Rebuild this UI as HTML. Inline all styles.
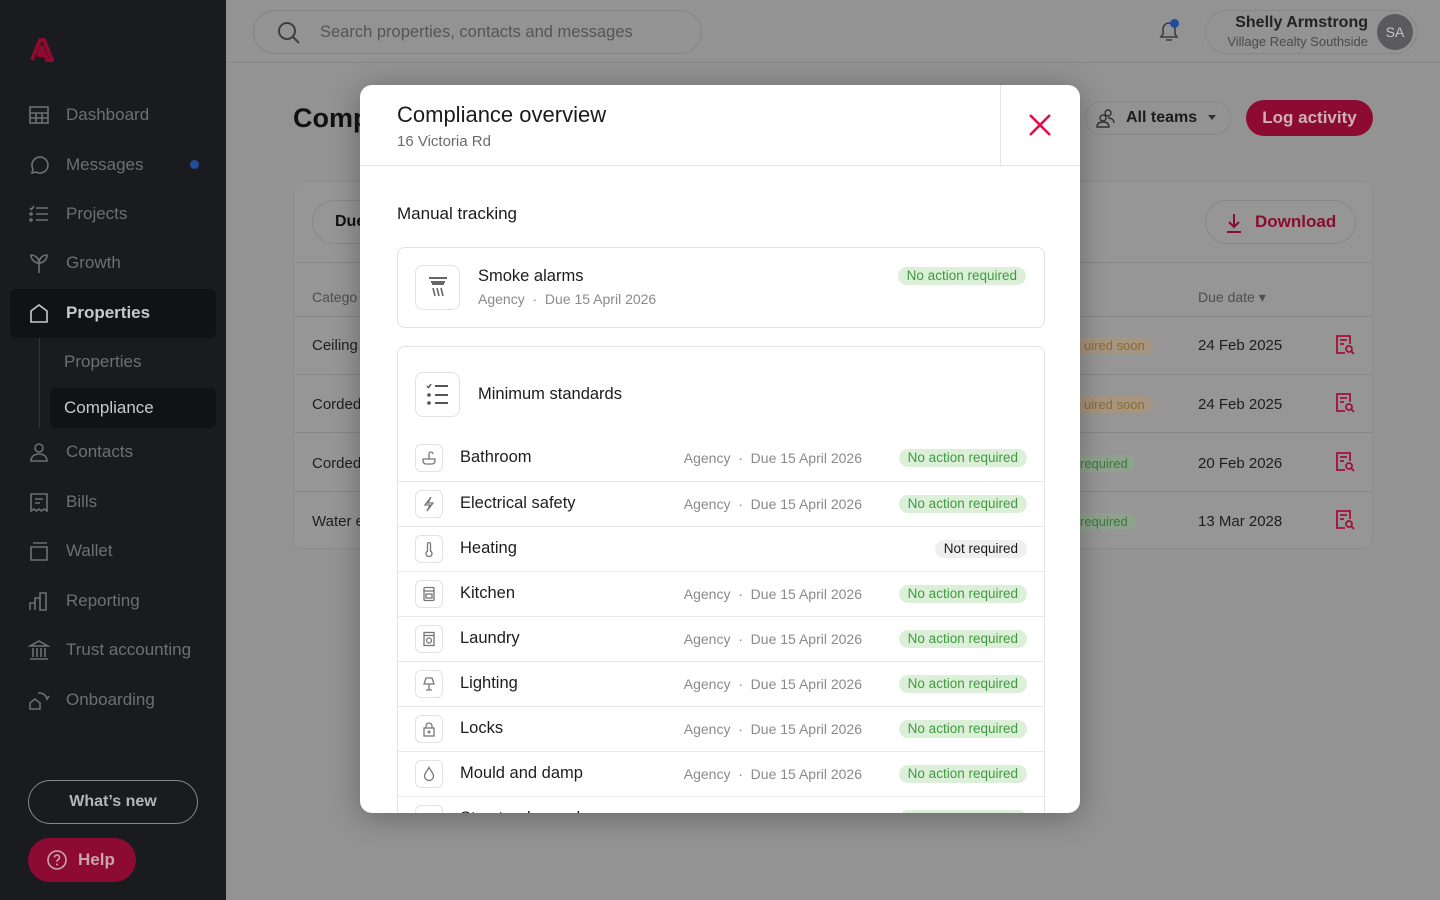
<!DOCTYPE html>
<html><head><meta charset="utf-8"><style>
*{box-sizing:border-box;margin:0;padding:0}
body{width:1440px;height:900px;overflow:hidden;font-family:"Liberation Sans",sans-serif;background:#939393;position:relative}
.abs{position:absolute}
.sb{left:0;top:0;width:226px;height:900px;background:#1a1b1f}
.nav{position:absolute;left:28px;font-size:17px;color:#6e6f73;display:flex;align-items:center;gap:16px;height:24px}
.nav svg{width:22px;height:22px;stroke:#6e6f73;fill:none;stroke-width:1.6}
.modal{left:360px;top:85px;width:720px;height:728px;background:#fff;border-radius:12px;overflow:hidden;box-shadow:0 4px 30px rgba(0,0,0,.3)}
.pill{position:absolute;right:18px;height:18px;line-height:18px;padding:0 9px;border-radius:9px;background:#dcefd8;color:#3f9a3f;font-size:13.5px}
.row{position:absolute;left:0;width:647px;height:45px;border-top:1px solid #e8e8e8}
.row .ic{position:absolute;left:17px;top:8px;width:28px;height:28px;border:1px solid #e2e2e2;border-radius:6px;display:flex;align-items:center;justify-content:center}
.row .ic svg{width:16px;height:16px;stroke:#777;fill:none;stroke-width:1.3}
.row .nm{position:absolute;left:62px;top:12px;font-size:16.5px;color:#1d1d1f}
.row .mt{position:absolute;right:183px;top:14px;font-size:14px;color:#8a8a8a}
.row .pill{top:13px}
.tr{position:absolute;left:0;width:1080px;height:58px;border-top:1px solid #878787}
</style></head><body>
<div class="abs sb"></div>
<svg class="abs" style="left:30px;top:38px" width="24" height="24" viewBox="0 0 24 24"><path d="M2 22 L10 2 L14 2 L22 22 L17 22 L12 9 L9 17 L15 17 L13 13" fill="none" stroke="#8f0a30" stroke-width="4" stroke-linejoin="round"/></svg>
<div class="nav" style="top:103px"><svg viewBox="0 0 22 22"><rect x="2" y="3" width="18" height="16"/><path d="M2 9h18M8 9v10M14 9v10M2 14h18"/></svg>Dashboard</div>
<div class="nav" style="top:153px"><svg viewBox="0 0 22 22"><path d="M4 19l1-4A8 8 0 1 1 8 18z"/></svg>Messages</div>
<div class="abs" style="left:190px;top:160px;width:9px;height:9px;border-radius:50%;background:#234c9a"></div>
<div class="nav" style="top:202px"><svg viewBox="0 0 22 22"><path d="M8 5h12M8 11h12M8 17h12M2 5l1.5 1.5L6 3"/><circle cx="3" cy="11" r="1"/><circle cx="3" cy="17" r="1"/></svg>Projects</div>
<div class="nav" style="top:251px"><svg viewBox="0 0 22 22"><path d="M11 21V11M11 11C11 6 7 3 3 3c0 5 4 8 8 8zM11 11c0-5 4-8 8-8 0 5-4 8-8 8z"/></svg>Growth</div>
<div class="abs" style="left:10px;top:289px;width:206px;height:49px;background:#111216;border-radius:6px"></div>
<div class="nav" style="top:301px;color:#c9c9cb;font-weight:bold"><svg viewBox="0 0 22 22" style="stroke:#c9c9cb"><path d="M3 20V9l8-6 8 6v11z"/></svg>Properties</div>
<div class="abs" style="left:39px;top:338px;width:1px;height:90px;background:#333"></div>
<div class="nav" style="top:350px;left:64px">Properties</div>
<div class="abs" style="left:50px;top:388px;width:166px;height:40px;background:#111216;border-radius:6px"></div>
<div class="nav" style="top:396px;left:64px;color:#c9c9cb">Compliance</div>
<div class="nav" style="top:440px"><svg viewBox="0 0 22 22"><circle cx="11" cy="7" r="4"/><path d="M3 20c0-5 4-7 8-7s8 2 8 7z"/></svg>Contacts</div>
<div class="nav" style="top:490px"><svg viewBox="0 0 22 22"><path d="M3 3h16v17l-3-2-2.5 2-2.5-2-2.5 2L6 18l-3 2zM7 8h8M7 12h5"/></svg>Bills</div>
<div class="nav" style="top:539px"><svg viewBox="0 0 22 22"><path d="M3 7h16v13H3zM5 3h14"/></svg>Wallet</div>
<div class="nav" style="top:589px"><svg viewBox="0 0 22 22"><path d="M2 20V13h5v7M7 20V8h5v12M12 20V3h6v17z"/></svg>Reporting</div>
<div class="nav" style="top:638px"><svg viewBox="0 0 22 22"><path d="M2 7l9-5 9 5zM5 9v9M9 9v9M13 9v9M17 9v9M2 20h18"/></svg>Trust accounting</div>
<div class="nav" style="top:688px"><svg viewBox="0 0 22 22"><path d="M2 20v-6l5-4 5 4v6zM10 4a8 8 0 0 1 9 6l2-3"/></svg>Onboarding</div>
<div class="abs" style="left:28px;top:780px;width:170px;height:44px;border:1.5px solid #88898c;border-radius:22px;color:#b4b5b8;font-size:16px;font-weight:bold;text-align:center;line-height:41px">What’s new</div>
<div class="abs" style="left:28px;top:838px;width:108px;height:44px;background:#8d0b33;border-radius:22px;color:#c9a5b0;font-size:17px;font-weight:bold;line-height:44px;padding-left:50px">Help</div>
<svg class="abs" style="left:46px;top:849px" width="22" height="22" viewBox="0 0 22 22"><circle cx="11" cy="11" r="9" fill="none" stroke="#c9a5b0" stroke-width="1.6"/><path d="M8.5 8.5a2.5 2.5 0 1 1 3.5 2.3c-.8.4-1 1-1 2" fill="none" stroke="#c9a5b0" stroke-width="1.6"/><circle cx="11" cy="15.5" r="1" fill="#c9a5b0"/></svg>

<div class="abs" style="left:226px;top:62px;width:1214px;height:1px;background:#878787"></div>
<div class="abs" style="left:253px;top:10px;width:449px;height:44px;border:1px solid #838383;border-radius:22px"></div>
<svg class="abs" style="left:276px;top:20px" width="26" height="26" viewBox="0 0 26 26"><circle cx="11" cy="11" r="8" fill="none" stroke="#3e3e3e" stroke-width="2"/><path d="M17 17l6 6" stroke="#3e3e3e" stroke-width="2"/></svg>
<div class="abs" style="left:320px;top:23px;font-size:16.5px;color:#555">Search properties, contacts and messages</div>
<svg class="abs" style="left:1156px;top:18px" width="26" height="26" viewBox="0 0 26 26"><path d="M5 19h16l-2-3v-5a6 6 0 0 0-12 0v5zM10 22h6" fill="none" stroke="#3e3e3e" stroke-width="1.6"/></svg>
<div class="abs" style="left:1170px;top:19px;width:9px;height:9px;border-radius:50%;background:#234c9a"></div>
<div class="abs" style="left:1205px;top:10px;width:212px;height:44px;border:1px solid #878787;border-radius:22px"></div>
<div class="abs" style="left:1190px;top:14px;width:178px;text-align:right;font-size:16px;font-weight:bold;color:#222">Shelly Armstrong</div>
<div class="abs" style="left:1190px;top:34px;width:178px;text-align:right;font-size:13px;color:#4a4a4a">Village Realty Southside</div>
<div class="abs" style="left:1377px;top:14px;width:36px;height:36px;border-radius:50%;background:#5b5b5d;color:#c6c6c6;font-size:14px;text-align:center;line-height:36px">SA</div>

<div class="abs" style="left:293px;top:103px;font-size:27px;font-weight:bold;color:#111">Comp</div>
<div class="abs" style="left:1085px;top:101px;width:146px;height:34px;border:1px solid #878787;border-radius:17px;font-size:16px;font-weight:bold;color:#1b1b1b;line-height:32px;padding-left:40px">All teams</div>
<svg class="abs" style="left:1096px;top:108px" width="20" height="20" viewBox="0 0 20 20"><circle cx="12" cy="5" r="3" fill="none" stroke="#333" stroke-width="1.4"/><circle cx="7" cy="10" r="3" fill="none" stroke="#333" stroke-width="1.4"/><path d="M1 19c0-4 3-5 6-5s6 1 6 5zM12 10c4 0 6 2 6 5" fill="none" stroke="#333" stroke-width="1.4"/></svg>
<div class="abs" style="left:1208px;top:115px;border:4px solid transparent;border-top:5px solid #333"></div>
<div class="abs" style="left:1246px;top:100px;width:127px;height:36px;background:#8d0b33;border-radius:18px;color:#cfb0ba;font-size:17px;font-weight:bold;text-align:center;line-height:36px">Log activity</div>
<div class="abs" style="left:293px;top:181px;width:1080px;height:368px;background:#969696;border-radius:10px;border:1px solid #8c8c8c;overflow:hidden">
  <div class="abs" style="left:18px;top:18px;width:80px;height:44px;border:1px solid #888;border-radius:22px;font-size:16px;font-weight:bold;color:#111;line-height:42px;padding-left:22px">Due</div>
  <div class="abs" style="left:911px;top:18px;width:151px;height:44px;border:1px solid #888;border-radius:22px;font-size:17px;font-weight:bold;color:#8a0c30;line-height:42px;padding-left:49px">Download</div>
  <svg class="abs" style="left:929px;top:30px" width="22" height="22" viewBox="0 0 22 22"><path d="M11 2v13M6 10l5 5 5-5M4 20h14" fill="none" stroke="#8a0c30" stroke-width="2"/></svg>
  <div class="tr" style="top:80px;border-top:1.5px solid #878787;height:55px"><div class="abs" style="left:18px;top:26px;font-size:14px;color:#4e4e4e">Catego</div><div class="abs" style="left:904px;top:26px;font-size:14px;color:#4e4e4e">Due date ▾</div></div>
  <div class="tr" style="top:134px"><div class="abs" style="left:18px;top:20px;font-size:15px;color:#1e1e1e">Ceiling</div><div class="abs" style="left:770px;top:20px;height:17px;padding:0 8px 0 20px;border-radius:9px;background:#a69580;color:#8c6b32;font-size:13px;line-height:17px">uired soon</div><div class="abs" style="left:904px;top:20px;font-size:15px;color:#1e1e1e">24 Feb 2025</div></div>
  <div class="tr" style="top:192px"><div class="abs" style="left:18px;top:21px;font-size:15px;color:#1e1e1e">Corded</div><div class="abs" style="left:770px;top:21px;height:17px;padding:0 8px 0 20px;border-radius:9px;background:#a69580;color:#8c6b32;font-size:13px;line-height:17px">uired soon</div><div class="abs" style="left:904px;top:21px;font-size:15px;color:#1e1e1e">24 Feb 2025</div></div>
  <div class="tr" style="top:250px"><div class="abs" style="left:18px;top:22px;font-size:15px;color:#1e1e1e">Corded</div><div class="abs" style="left:770px;top:22px;height:17px;padding:0 8px 0 16px;border-radius:9px;background:#8fa28d;color:#3c7a3c;font-size:13px;line-height:17px">required</div><div class="abs" style="left:904px;top:22px;font-size:15px;color:#1e1e1e">20 Feb 2026</div></div>
  <div class="tr" style="top:309px"><div class="abs" style="left:18px;top:21px;font-size:15px;color:#1e1e1e">Water e</div><div class="abs" style="left:770px;top:21px;height:17px;padding:0 8px 0 16px;border-radius:9px;background:#8fa28d;color:#3c7a3c;font-size:13px;line-height:17px">required</div><div class="abs" style="left:904px;top:21px;font-size:15px;color:#1e1e1e">13 Mar 2028</div></div>
</div>
<svg class="abs" style="left:1334px;top:334px" width="22" height="22" viewBox="0 0 22 22"><path d="M11 19H3V2h13v8M6 6h7M6 10h4" fill="none" stroke="#a2103e" stroke-width="1.8"/><circle cx="15" cy="15" r="3" fill="none" stroke="#a2103e" stroke-width="1.8"/><path d="M17 17l3 3" stroke="#a2103e" stroke-width="1.8"/></svg>
<svg class="abs" style="left:1334px;top:392px" width="22" height="22" viewBox="0 0 22 22"><path d="M11 19H3V2h13v8M6 6h7M6 10h4" fill="none" stroke="#a2103e" stroke-width="1.8"/><circle cx="15" cy="15" r="3" fill="none" stroke="#a2103e" stroke-width="1.8"/><path d="M17 17l3 3" stroke="#a2103e" stroke-width="1.8"/></svg>
<svg class="abs" style="left:1334px;top:451px" width="22" height="22" viewBox="0 0 22 22"><path d="M11 19H3V2h13v8M6 6h7M6 10h4" fill="none" stroke="#a2103e" stroke-width="1.8"/><circle cx="15" cy="15" r="3" fill="none" stroke="#a2103e" stroke-width="1.8"/><path d="M17 17l3 3" stroke="#a2103e" stroke-width="1.8"/></svg>
<svg class="abs" style="left:1334px;top:509px" width="22" height="22" viewBox="0 0 22 22"><path d="M11 19H3V2h13v8M6 6h7M6 10h4" fill="none" stroke="#a2103e" stroke-width="1.8"/><circle cx="15" cy="15" r="3" fill="none" stroke="#a2103e" stroke-width="1.8"/><path d="M17 17l3 3" stroke="#a2103e" stroke-width="1.8"/></svg>

<div class="abs modal">
  <div class="abs" style="left:37px;top:17px;font-size:22px;color:#1b1b1d">Compliance overview</div>
  <div class="abs" style="left:37px;top:48px;font-size:15px;color:#6b6b6b">16 Victoria Rd</div>
  <div class="abs" style="left:640px;top:0;width:1px;height:80px;background:#e4e4e4"></div>
  <svg class="abs" style="left:667px;top:27px" width="26" height="26" viewBox="0 0 26 26"><path d="M3 3l20 20M23 3L3 23" stroke="#e0104d" stroke-width="2.6"/></svg>
  <div class="abs" style="left:0;top:80px;width:720px;height:1px;background:#e4e4e4"></div>
  <div class="abs" style="left:37px;top:119px;font-size:17px;color:#1b1b1d">Manual tracking</div>
  <div class="abs" style="left:37px;top:162px;width:648px;height:81px;border:1px solid #e2e2e2;border-radius:8px">
    <div class="abs" style="left:17px;top:17px;width:45px;height:45px;border:1px solid #e2e2e2;border-radius:8px"></div>
    <svg class="abs" style="left:28px;top:27px" width="24" height="26" viewBox="0 0 24 26"><path d="M3 3h18M5 7h14M7 7v2h10V7" fill="none" stroke="#666" stroke-width="2"/><path d="M7 13l2 8M11 13l2 8M15 13l2 8" stroke="#666" stroke-width="1.6"/></svg>
    <div class="abs" style="left:80px;top:19px;font-size:16.5px;color:#1b1b1d">Smoke alarms</div>
    <div class="abs" style="left:80px;top:43px;font-size:14px;color:#8a8a8a">Agency &nbsp;·&nbsp; Due 15 April 2026</div>
    <div class="pill" style="top:19px">No action required</div>
  </div>
  <div class="abs" style="left:37px;top:261px;width:648px;height:500px;border:1px solid #e2e2e2;border-radius:8px">
    <div class="abs" style="left:17px;top:25px;width:45px;height:45px;border:1px solid #e2e2e2;border-radius:8px"></div>
    <svg class="abs" style="left:28px;top:36px" width="24" height="24" viewBox="0 0 24 24"><path d="M9 3h13M9 12h13M9 20h13" stroke="#555" stroke-width="2"/><path d="M1 3l1.5 1.5L5 1" fill="none" stroke="#555" stroke-width="1.5"/><circle cx="3" cy="12" r="1.8" fill="#555"/><circle cx="3" cy="20" r="1.8" fill="#555"/></svg>
    <div class="abs" style="left:80px;top:38px;font-size:16.5px;color:#1b1b1d">Minimum standards</div>

    <div class="row" style="top:89px;border-top:none"><div class="ic"><svg viewBox="0 0 16 16"><path d="M2 9h12v2a3 3 0 0 1-3 3H5a3 3 0 0 1-3-3zM8 9V4a2 2 0 0 1 4 0"/></svg></div><div class="nm">Bathroom</div><div class="mt">Agency &nbsp;·&nbsp; Due 15 April 2026</div><div class="pill">No action required</div></div>
    <div class="row" style="top:134px"><div class="ic"><svg viewBox="0 0 16 16"><path d="M10 1L4 9h5l-3 6 6-8H7z"/></svg></div><div class="nm">Electrical safety</div><div class="mt">Agency &nbsp;·&nbsp; Due 15 April 2026</div><div class="pill">No action required</div></div>
    <div class="row" style="top:179px"><div class="ic"><svg viewBox="0 0 16 16"><path d="M6.5 10V3a1.5 1.5 0 0 1 3 0v7a3 3 0 1 1-3 0z"/></svg></div><div class="nm">Heating</div><div class="pill" style="background:#efefef;color:#1b1b1d">Not required</div></div>
    <div class="row" style="top:224px"><div class="ic"><svg viewBox="0 0 16 16"><rect x="3" y="1.5" width="10" height="13" rx="1"/><path d="M3 5h10"/><rect x="5" y="8" width="6" height="4"/></svg></div><div class="nm">Kitchen</div><div class="mt">Agency &nbsp;·&nbsp; Due 15 April 2026</div><div class="pill">No action required</div></div>
    <div class="row" style="top:269px"><div class="ic"><svg viewBox="0 0 16 16"><rect x="3" y="1.5" width="10" height="13"/><path d="M3 4.5h10"/><circle cx="8" cy="9.5" r="2.5"/></svg></div><div class="nm">Laundry</div><div class="mt">Agency &nbsp;·&nbsp; Due 15 April 2026</div><div class="pill">No action required</div></div>
    <div class="row" style="top:314px"><div class="ic"><svg viewBox="0 0 16 16"><path d="M5 2h6l2 6H3zM8 8v6M5 14h6"/></svg></div><div class="nm">Lighting</div><div class="mt">Agency &nbsp;·&nbsp; Due 15 April 2026</div><div class="pill">No action required</div></div>
    <div class="row" style="top:359px"><div class="ic"><svg viewBox="0 0 16 16"><rect x="3" y="7" width="10" height="8"/><path d="M5 7V5a3 3 0 0 1 6 0v2"/><circle cx="8" cy="11" r=".8"/></svg></div><div class="nm">Locks</div><div class="mt">Agency &nbsp;·&nbsp; Due 15 April 2026</div><div class="pill">No action required</div></div>
    <div class="row" style="top:404px"><div class="ic"><svg viewBox="0 0 16 16"><path d="M8 1.5C6 5 3.5 7.5 3.5 10a4.5 4.5 0 0 0 9 0C12.5 7.5 10 5 8 1.5z"/></svg></div><div class="nm">Mould and damp</div><div class="mt">Agency &nbsp;·&nbsp; Due 15 April 2026</div><div class="pill">No action required</div></div>
    <div class="row" style="top:449px"><div class="ic"><svg viewBox="0 0 16 16"><path d="M2 8l6-5 6 5"/></svg></div><div class="nm">Structural soundness</div><div class="mt">Agency &nbsp;·&nbsp; Due 15 April 2026</div><div class="pill">No action required</div></div>
  </div>
</div>
</body></html>
